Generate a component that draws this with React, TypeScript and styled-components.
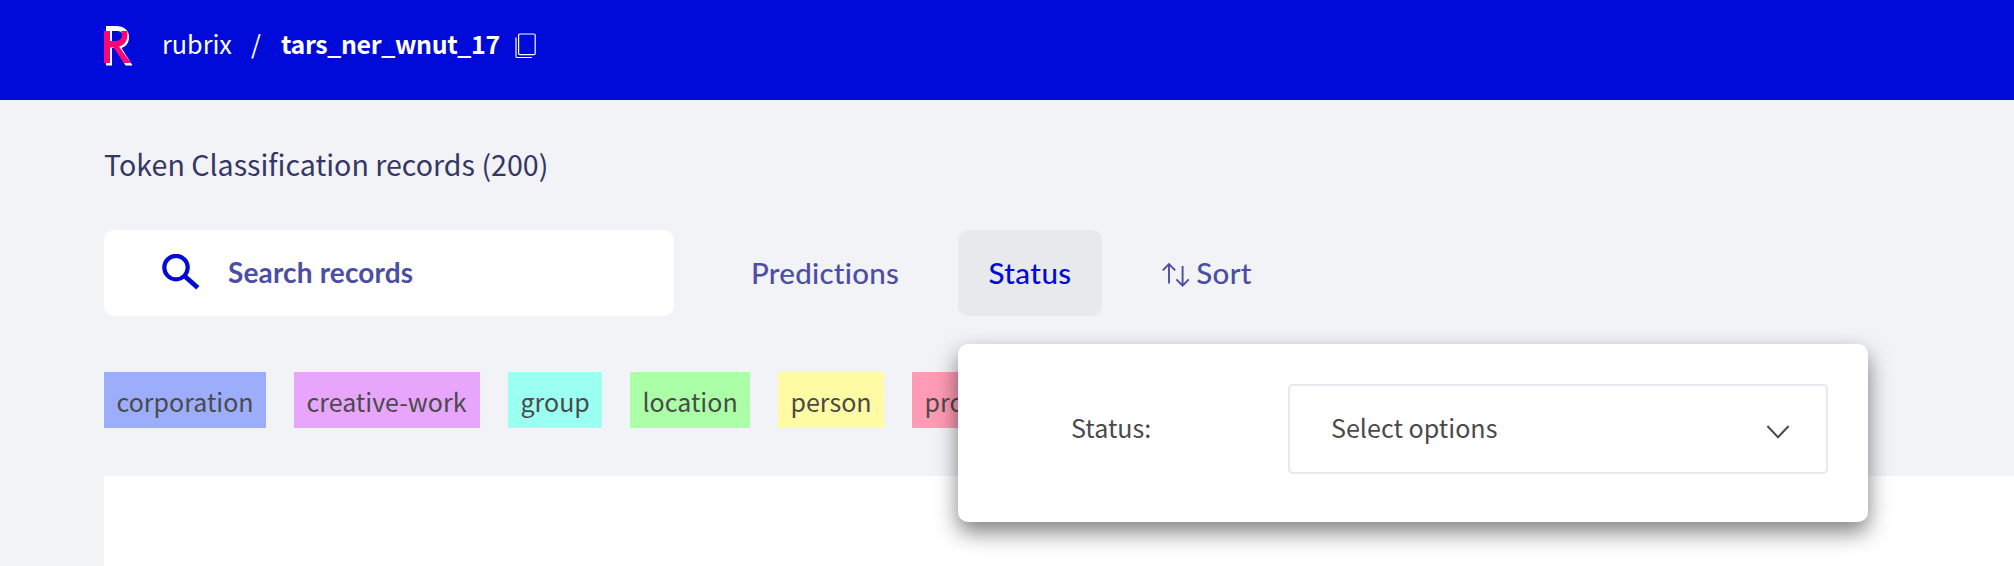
import React from "react";
import styled, { createGlobalStyle } from "styled-components";

const sans = `"Noto Sans CJK SC", "Open Sans", sans-serif`;
const display = `Lato, "Open Sans", sans-serif`;

const GlobalStyle = createGlobalStyle`
  * { box-sizing: border-box; }
  body { margin: 0; background: #f1f3f7; font-family: ${sans}; color: #4a4a4a; overflow: hidden; }
  button { font: inherit; border: 0; background: none; padding: 0; }
`;

const Page = styled.div`
  height: 566px;
  display: flex;
  flex-direction: column;
  overflow: hidden;
`;

const TopBar = styled.header`
  flex: none;
  height: 100px;
  padding: 0 0 9px 104px;
  display: flex;
  align-items: center;
  background: #000bd9;
  color: #fff;
`;

const Breadcrumbs = styled.nav`
  display: flex;
  align-items: center;
  margin-left: 28px;
  line-height: 40px;
`;

const Crumb = styled.span<{ $current?: boolean; $width: number }>`
  width: ${(p) => p.$width}px;
  padding-bottom: 5px;
  font-size: ${(p) => (p.$current ? 24.9 : 25.2)}px;
  font-weight: ${(p) => (p.$current ? 700 : 400)};
  letter-spacing: ${(p) => (p.$current ? -0.35 : 0)}px;
  white-space: nowrap;
`;

const Main = styled.main`
  flex: 1;
  padding-left: 104px;
  display: flex;
  flex-direction: column;
`;

const Title = styled.h1`
  margin: 43px 0 0;
  height: 87px;
  font-size: 28.6px;
  line-height: 42px;
  font-weight: 400;
  color: #353664;
`;

const Filters = styled.div`
  display: flex;
  height: 86px;
`;

const SearchBox = styled.label`
  width: 570px;
  padding-left: 58px;
  display: flex;
  align-items: center;
  gap: 28px;
  border-radius: 10px;
  background: #fff;
  color: #4c4ea3;
  font: 700 28px/40px ${display};
  letter-spacing: 0.15px;
  svg { margin-top: -2px; }
`;

const SearchText = styled.span`
  padding-bottom: 2px;
`;

const FilterButton = styled.button<{ $active?: boolean; $width: number; $gap: number }>`
  position: relative;
  width: ${(p) => p.$width}px;
  margin-left: ${(p) => p.$gap}px;
  display: flex;
  align-items: center;
  justify-content: center;
  gap: 6px;
  border-radius: 10px;
  background: ${(p) => (p.$active ? "#e8e9ed" : "transparent")};
  color: ${(p) => (p.$active ? "#000bd9" : "#4c4ea3")};
  svg { margin-top: 3px; }
`;

const FilterText = styled.span<{ $spacing?: number }>`
  font: 500 29.5px/40px ${display};
  letter-spacing: ${(p) => p.$spacing ?? 0}px;
  white-space: nowrap;
`;

const Tags = styled.div`
  display: flex;
  gap: 28px;
  margin-top: 56px;
`;

const Tag = styled.span<{ $color: string; $width: number }>`
  width: ${(p) => p.$width}px;
  height: 56px;
  padding: 1px 0 0 12.5px;
  background: ${(p) => p.$color};
  font-size: 25px;
  line-height: 56px;
  white-space: nowrap;
`;

const Records = styled.section`
  flex: 1;
  margin-top: 48px;
  border-top-left-radius: 2px;
  background: #fff;
`;

const Dropdown = styled.div`
  position: absolute;
  top: 114px;
  left: 0;
  width: 910px;
  height: 178px;
  padding: 40px 40px 0 113px;
  display: flex;
  align-items: flex-start;
  justify-content: space-between;
  border-radius: 10px;
  background: #fff;
  box-shadow: 0 10px 22px rgba(0, 0, 0, 0.5);
  color: #4a4a4a;
  font: 400 25.1px/86px ${sans};
  z-index: 2;
`;

const Select = styled.div`
  width: 540px;
  height: 90px;
  padding: 0 36px 4px 41px;
  display: flex;
  align-items: center;
  justify-content: space-between;
  border: 2px solid #e8e9ef;
  border-radius: 5px;
  svg { margin-top: 10px; }
`;

const Logo = () => (
  <svg width="30" height="40" viewBox="0 0 30 40">
    <path fill="#fff" d="M2 0H12C20 0 25 4 25 11C25 17 22 20.5 17.5 22L28.5 39.6H21.5L12 22H8V39.6H2ZM8 5V16H12C17 16 19 14 19 10.5C19 7 17 5 12 5Z" />
    <path fill="#ff0675" d="M0 5H6V15H10C15 15 18 13 18 9Q18 6.5 17 5H23.4V9C23.4 15.5 20 19 15 20.6L27 37H20L9.5 21.5H6V37H0Z" />
  </svg>
);

const CopyIcon = () => (
  <svg width="22" height="26" viewBox="0 0 22 26" fill="none" stroke="#fff" strokeWidth="1.2">
    <rect x="3.6" y="1" width="16.6" height="20.6" rx="1.2" />
    <path d="M1 4.5V23.2Q1 24.5 2.3 24.5H17" />
  </svg>
);

const SearchIcon = () => (
  <svg width="38" height="36" viewBox="0 0 38 36" fill="none" stroke="#000bd9" strokeWidth="4.2">
    <circle cx="14" cy="13.6" r="11.7" />
    <path d="M22.5 22L35.8 33.8" strokeWidth="4.8" />
  </svg>
);

const SortIcon = () => (
  <svg width="28" height="26" viewBox="0 0 28 26" fill="none" stroke="#4c4ea3" strokeWidth="1.9">
    <path d="M7 21.5V2M.8 8.3L7 2L13.2 8.3M20.6 4V23.5M14.4 17.3L20.6 23.6L26.8 17.3" />
  </svg>
);

const Chevron = () => (
  <svg width="24" height="16" viewBox="0 0 24 16" fill="none" stroke="#4a4a4a" strokeWidth="2">
    <path d="M1.4 2L12 13.2L22.6 2" />
  </svg>
);

const tags = [
  { name: "corporation", color: "#9badfb", width: 162 },
  { name: "creative-work", color: "#e8a5fc", width: 186 },
  { name: "group", color: "#9bfff2", width: 94 },
  { name: "location", color: "#abffa6", width: 120 },
  { name: "person", color: "#fffaa4", width: 106 },
  { name: "product", color: "#ff9bb4", width: 114 },
];

export default function App() {
  return (
    <Page>
      <GlobalStyle />
      <TopBar>
        <Logo />
        <Breadcrumbs>
          <Crumb $width={89}>rubrix</Crumb>
          <Crumb $width={30}>/</Crumb>
          <Crumb $current $width={234}>tars_ner_wnut_17</Crumb>
          <CopyIcon />
        </Breadcrumbs>
      </TopBar>
      <Main>
        <Title>Token Classification records (200)</Title>
        <Filters>
          <SearchBox>
            <SearchIcon />
            <SearchText>Search records</SearchText>
          </SearchBox>
          <FilterButton $width={206} $gap={48}>
            <FilterText $spacing={0.25}>Predictions</FilterText>
          </FilterButton>
          <FilterButton $active $width={144} $gap={30}>
            <FilterText $spacing={0.4}>Status</FilterText>
            <Dropdown>
              <span>Status:</span>
              <Select>
                Select options
                <Chevron />
              </Select>
            </Dropdown>
          </FilterButton>
          <FilterButton $width={150} $gap={30}>
            <SortIcon />
            <FilterText $spacing={0.3}>Sort</FilterText>
          </FilterButton>
        </Filters>
        <Tags>
          {tags.map((t) => (
            <Tag key={t.name} $color={t.color} $width={t.width}>
              {t.name}
            </Tag>
          ))}
        </Tags>
        <Records />
      </Main>
    </Page>
  );
}
